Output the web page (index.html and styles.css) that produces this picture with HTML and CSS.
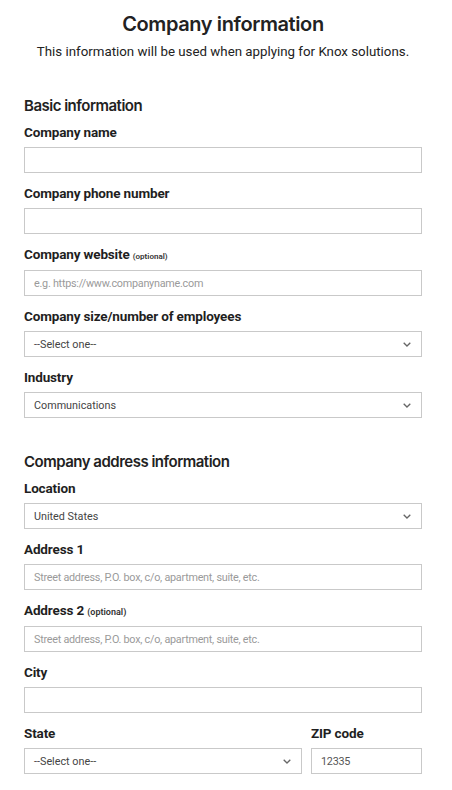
FILE: index.html
```html
<!DOCTYPE html>
<html lang="en">
<head>
<meta charset="utf-8">
<title>Company information</title>
<link rel="stylesheet" href="styles.css">
</head>
<body>
<main class="page">
  <header class="intro">
    <h1 class="title">Company information</h1>
    <p class="subtitle">This information will be used when applying for Knox solutions.</p>
  </header>

  <section class="section">
    <h2 class="section-title">Basic information</h2>
    <div class="field">
      <label class="label">Company name</label>
      <div class="input"></div>
    </div>
    <div class="field">
      <label class="label">Company phone number</label>
      <div class="input"></div>
    </div>
    <div class="field">
      <label class="label label-opt">Company website <span class="optional small">(optional)</span></label>
      <div class="input placeholder">e.g. https://www.companyname.com</div>
    </div>
    <div class="field">
      <label class="label">Company size/number of employees</label>
      <div class="input select"><span>--Select one--</span><svg class="chev" viewBox="0 0 8 5" width="8" height="5"><path d="M0.7 0.7l3.3 3.3 3.3-3.3" fill="none" stroke="#666" stroke-width="1.3"/></svg></div>
    </div>
    <div class="field">
      <label class="label">Industry</label>
      <div class="input select"><span>Communications</span><svg class="chev" viewBox="0 0 8 5" width="8" height="5"><path d="M0.7 0.7l3.3 3.3 3.3-3.3" fill="none" stroke="#666" stroke-width="1.3"/></svg></div>
    </div>
  </section>

  <section class="section section-2">
    <h2 class="section-title">Company address information</h2>
    <div class="field">
      <label class="label">Location</label>
      <div class="input select"><span>United States</span><svg class="chev" viewBox="0 0 8 5" width="8" height="5"><path d="M0.7 0.7l3.3 3.3 3.3-3.3" fill="none" stroke="#666" stroke-width="1.3"/></svg></div>
    </div>
    <div class="field">
      <label class="label">Address 1</label>
      <div class="input placeholder">Street address, P.O. box, c/o, apartment, suite, etc.</div>
    </div>
    <div class="field">
      <label class="label label-opt">Address 2 <span class="optional">(optional)</span></label>
      <div class="input placeholder">Street address, P.O. box, c/o, apartment, suite, etc.</div>
    </div>
    <div class="field">
      <label class="label">City</label>
      <div class="input"></div>
    </div>
    <div class="row">
      <div class="field grow">
        <label class="label">State</label>
        <div class="input select"><span>--Select one--</span><svg class="chev" viewBox="0 0 8 5" width="8" height="5"><path d="M0.7 0.7l3.3 3.3 3.3-3.3" fill="none" stroke="#666" stroke-width="1.3"/></svg></div>
      </div>
      <div class="field zip">
        <label class="label">ZIP code</label>
        <div class="input value">12335</div>
      </div>
    </div>
  </section>
</main>
</body>
</html>
```

FILE: styles.css
```css
* { box-sizing: border-box; }
html, body { margin: 0; padding: 0; background: #fff; }
body { font-family: Roboto, "Liberation Sans", sans-serif; color: #1f1f1f; }

.page { padding: 10px 30px 0 24px; }

.intro { text-align: center; }
.title {
  margin: 0;
  font-family: Inter, "Noto Sans", sans-serif;
  font-weight: 600;
  font-size: 20px;
  line-height: 28px;
  letter-spacing: -0.4px;
  color: #222;
}
.subtitle {
  margin: 0;
  padding-top: 4px;
  font-size: 13.3px;
  line-height: 20px;
  color: #222;
}

.section { margin-top: 33px; }
.section-2 { margin-top: 33px; }

.section-title {
  margin: 0 0 5px;
  font-family: Inter, "Noto Sans", sans-serif;
  font-weight: 600;
  font-size: 15px;
  line-height: 22px;
  letter-spacing: -0.5px;
  color: #222;
}

.field { margin-bottom: 10px; }
.label {
  display: block;
  height: 20px;
  margin-bottom: 5px;
  font-size: 13.5px;
  font-weight: 700;
  line-height: 20px;
  letter-spacing: -0.15px;
  color: #1f1f1f;
}
.label-opt { height: 21px; line-height: 21px; }
.optional {
  font-size: 9px;
  font-weight: 600;
  line-height: 1;
  letter-spacing: 0;
  color: #333;
}
.optional.small { font-size: 8px; }

.input {
  height: 26px;
  border: 1px solid #c9c9c9;
  background: #fff;
  padding: 0 9px;
  display: flex;
  align-items: center;
  font-size: 10.8px;
  letter-spacing: -0.25px;
  color: #444;
}
.placeholder { color: #9a9a9a; }
.value { color: #555; }
.select { justify-content: space-between; padding-right: 10px; letter-spacing: 0; }
.chev { display: block; }

.row { display: flex; gap: 9px; }
.grow { flex: 1; }
.zip { width: 111px; }
```
